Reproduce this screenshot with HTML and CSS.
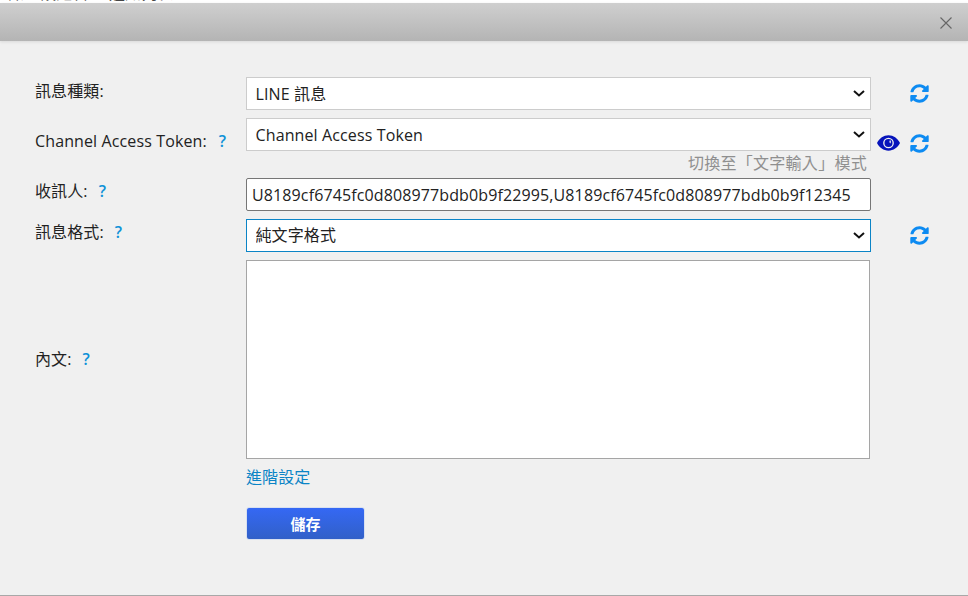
FILE: index.html
```html
<!DOCTYPE html>
<html lang="zh-Hant">
<head>
<meta charset="utf-8">
<title>訊息設定</title>
<link rel="stylesheet" href="styles.css">
</head>
<body>
<div class="behind"><span class="behind-text">訊息設定管理 通知列表</span></div>
<div class="dialog">
  <header class="head">
    <button class="close" aria-label="關閉">
      <svg width="14" height="14" viewBox="0 0 14 14"><path d="M1.500 1.500l11 11M12.500 1.500l-11 11" stroke="#666" stroke-width="1.1" fill="none"/></svg>
    </button>
  </header>
  <main class="form">
    <div class="row r1">
      <label class="label l1">訊息種類:</label>
      <div class="field"><select class="ctl"><option>LINE 訊息</option></select></div>
      <div class="icons">
        <svg class="sync" viewBox="0 0 512 512"><path d="M370.72 133.28C339.458 104.008 298.888 87.962 255.848 88c-77.458.068-144.328 53.178-162.791 126.85-1.344 5.363-6.122 9.15-11.651 9.15H24.103c-7.498 0-13.194-6.807-11.807-14.176C33.933 94.924 134.813 8 256 8c66.448 0 126.791 26.136 171.315 68.685L463.03 40.97C478.149 25.851 504 36.559 504 57.941V192c0 13.255-10.745 24-24 24H345.941c-21.382 0-32.09-25.851-16.971-40.971l41.75-41.749zM32 296h134.059c21.382 0 32.09 25.851 16.971 40.971l-41.75 41.75c31.262 29.273 71.835 45.319 114.876 45.28 77.418-.07 144.315-53.144 162.787-126.849 1.344-5.363 6.122-9.15 11.651-9.15h57.304c7.498 0 13.194 6.807 11.807 14.176C478.067 417.076 377.187 504 256 504c-66.448 0-126.791-26.136-171.315-68.685L48.97 471.03C33.851 486.149 8 475.441 8 454.059V320c0-13.255 10.745-24 24-24z"/></svg>
      </div>
    </div>
    <div class="row r2">
      <label class="label l2">Channel Access Token:<span class="q q-wide">?</span></label>
      <div class="field">
        <select class="ctl"><option>Channel Access Token</option></select>
        <div class="hint">切換至「文字輸入」模式</div>
      </div>
      <div class="icons icons-eye">
        <svg class="eye" viewBox="0 0 24 16"><path fill-rule="evenodd" d="M12 0C6.800 0 2.600 3.200 0 8c2.600 4.800 6.800 8 12 8s9.400-3.200 12-8C21.400 3.200 17.200 0 12 0zm0 2.400a5.600 5.600 0 1 1 0 11.200 5.600 5.600 0 0 1 0-11.200z"/><path fill-rule="evenodd" d="M12 3.800a4.200 4.200 0 1 1 0 8.400 4.200 4.200 0 0 1 0-8.400zm1.800 1a2.400 2.400 0 0 0 .2 3.800 3.200 3.200 0 0 0-.2-3.800z"/></svg>
        <svg class="sync" viewBox="0 0 512 512"><path d="M370.72 133.28C339.458 104.008 298.888 87.962 255.848 88c-77.458.068-144.328 53.178-162.791 126.85-1.344 5.363-6.122 9.15-11.651 9.15H24.103c-7.498 0-13.194-6.807-11.807-14.176C33.933 94.924 134.813 8 256 8c66.448 0 126.791 26.136 171.315 68.685L463.03 40.97C478.149 25.851 504 36.559 504 57.941V192c0 13.255-10.745 24-24 24H345.941c-21.382 0-32.09-25.851-16.971-40.971l41.75-41.749zM32 296h134.059c21.382 0 32.09 25.851 16.971 40.971l-41.75 41.75c31.262 29.273 71.835 45.319 114.876 45.28 77.418-.07 144.315-53.144 162.787-126.849 1.344-5.363 6.122-9.15 11.651-9.15h57.304c7.498 0 13.194 6.807 11.807 14.176C478.067 417.076 377.187 504 256 504c-66.448 0-126.791-26.136-171.315-68.685L48.97 471.03C33.851 486.149 8 475.441 8 454.059V320c0-13.255 10.745-24 24-24z"/></svg>
      </div>
    </div>
    <div class="row r3">
      <label class="label l3">收訊人:<span class="q">?</span></label>
      <div class="field"><input class="ctl text" type="text" value="U8189cf6745fc0d808977bdb0b9f22995,U8189cf6745fc0d808977bdb0b9f12345"></div>
    </div>
    <div class="row r4">
      <label class="label l4">訊息格式:<span class="q">?</span></label>
      <div class="field"><select class="ctl focus"><option>純文字格式</option></select></div>
      <div class="icons">
        <svg class="sync" viewBox="0 0 512 512"><path d="M370.72 133.28C339.458 104.008 298.888 87.962 255.848 88c-77.458.068-144.328 53.178-162.791 126.85-1.344 5.363-6.122 9.15-11.651 9.15H24.103c-7.498 0-13.194-6.807-11.807-14.176C33.933 94.924 134.813 8 256 8c66.448 0 126.791 26.136 171.315 68.685L463.03 40.97C478.149 25.851 504 36.559 504 57.941V192c0 13.255-10.745 24-24 24H345.941c-21.382 0-32.09-25.851-16.971-40.971l41.75-41.749zM32 296h134.059c21.382 0 32.09 25.851 16.971 40.971l-41.75 41.75c31.262 29.273 71.835 45.319 114.876 45.28 77.418-.07 144.315-53.144 162.787-126.849 1.344-5.363 6.122-9.15 11.651-9.15h57.304c7.498 0 13.194 6.807 11.807 14.176C478.067 417.076 377.187 504 256 504c-66.448 0-126.791-26.136-171.315-68.685L48.97 471.03C33.851 486.149 8 475.441 8 454.059V320c0-13.255 10.745-24 24-24z"/></svg>
      </div>
    </div>
    <div class="row r5">
      <label class="label l5">內文:<span class="q">?</span></label>
      <div class="field"><textarea class="area"></textarea></div>
    </div>
    <div class="row r6">
      <div class="spacer"></div>
      <div class="field">
        <a class="link" href="#">進階設定</a>
        <button class="save">儲存</button>
      </div>
    </div>
  </main>
</div>
</body>
</html>
```
FILE: styles.css
```css
* { box-sizing: border-box; }
html, body { margin: 0; padding: 0; height: 100%; overflow: hidden; }
body {
  background: #f0f0f0;
  font-family: "Open Sans", "Noto Sans CJK TC", sans-serif;
  font-size: 16px;
  letter-spacing: .12px;
  color: #222;
}
.behind {
  height: 2px;
  overflow: hidden;
  background: #fff;
  padding-left: 8px;
  line-height: 1;
}
.behind-text {
  display: block;
  margin-top: -15px;
  font-size: 16px;
  color: #444;
}
.dialog {
  height: 594px;
  border-top: 1px solid #fff;
  border-bottom: 1px solid #a8a8a8;
  display: flex;
  flex-direction: column;
}
.head {
  height: 38px;
  background: linear-gradient(#cfcfcf, #b4b4b4);
  box-shadow: 0 1px 3px rgba(0,0,0,.1);
  display: flex;
  justify-content: flex-end;
  align-items: center;
  padding-right: 15px;
  flex: none;
}
.close {
  border: 0;
  background: none;
  padding: 0;
  width: 14px;
  height: 14px;
  display: flex;
  margin-top: 2px;
}
.form {
  padding: 36px 0 0 35px;
  display: flex;
  flex-direction: column;
}
.row {
  display: flex;
  align-items: flex-start;
}
.r1, .r3, .r4 { margin-bottom: 8px; }
.r2 { margin-bottom: 6px; }
.label {
  width: 211px;
  flex: none;
  line-height: 20px;
  color: #222;
  white-space: nowrap;
}
.spacer { width: 211px; flex: none; }
.l1 { padding-top: 4px; }
.l2 { padding-top: 13px; }
.l3 { padding-top: 3px; }
.l4 { padding-top: 3px; }
.l5 { padding-top: 89px; }
.q {
  color: #0e92d8;
  font-weight: 600;
  margin-left: 11px;
}
.q-wide { margin-left: 12px; }
.field { width: 625px; flex: none; }
.ctl {
  display: block;
  width: 100%;
  height: 33px;
  background: #fff;
  border: 1px solid #ccc;
  border-radius: 0;
  padding: 0 0 0 5px;
  font: inherit;
  letter-spacing: inherit;
  color: #222;
  outline: none;
}
select.ctl {
  appearance: none;
  -webkit-appearance: none;
  padding-left: 8.5px;
  background-image: url("data:image/svg+xml,%3Csvg xmlns='http://www.w3.org/2000/svg' width='12' height='7' viewBox='0 0 12 7'%3E%3Cpath d='M1 1l5 4.500L11 1' stroke='%23111' stroke-width='2' fill='none'/%3E%3C/svg%3E");
  background-repeat: no-repeat;
  background-position: right 5px center;
}
.text {
  border: 1px solid #767676;
  border-radius: 2px;
  padding: 0 5px;
}
.focus { border-color: #0b84c6; line-height: 31px; padding-bottom: 2px; }
.hint {
  height: 21px;
  line-height: 24px;
  text-align: right;
  color: #8f8f8f;
  padding-right: 4px;
  letter-spacing: .28px;
  white-space: nowrap;
}
.icons {
  display: flex;
  align-items: center;
  padding-left: 39px;
  height: 33px;
}
.icons-eye { padding-left: 6px; height: 50px; gap: 10px; }
.sync { width: 19px; height: 19px; fill: #0d8bf2; flex: none; }
.eye { width: 23px; height: 16px; fill: #0714bb; flex: none; }
.area {
  display: block;
  width: 624px;
  height: 199px;
  background: #fff;
  border: 1px solid #a5a5a5;
  resize: none;
  outline: none;
  padding: 0;
}
.link {
  display: block;
  margin-top: 8px;
  line-height: 21px;
  color: #0b84c6;
  text-decoration: none;
}
.save {
  display: block;
  width: 119px;
  height: 33px;
  margin-top: 19px;
  border: 1px solid #d8e0f0;
  border-radius: 3px;
  background: linear-gradient(#3568f4, #3160c8);
  color: #fff;
  font: inherit;
  font-weight: 700;
  font-size: 15px;
}
```
